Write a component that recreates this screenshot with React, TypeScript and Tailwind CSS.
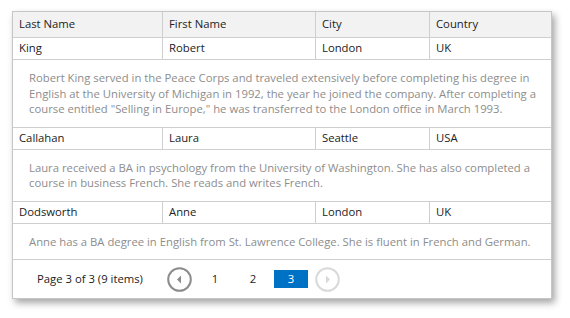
import React from "react";

const rows = [
  {
    last: "King",
    first: "Robert",
    city: "London",
    country: "UK",
    notes:
      'Robert King served in the Peace Corps and traveled extensively before completing his degree in English at the University of Michigan in 1992, the year he joined the company. After completing a course entitled "Selling in Europe," he was transferred to the London office in March 1993.',
  },
  {
    last: "Callahan",
    first: "Laura",
    city: "Seattle",
    country: "USA",
    notes:
      "Laura received a BA in psychology from the University of Washington. She has also completed a course in business French. She reads and writes French.",
  },
  {
    last: "Dodsworth",
    first: "Anne",
    city: "London",
    country: "UK",
    notes:
      "Anne has a BA degree in English from St. Lawrence College. She is fluent in French and German.",
  },
];

const grid = "grid grid-cols-[150px_153px_114px_1fr]";

function Circle({ dir, active }: { dir: "l" | "r"; active: boolean }) {
  const c = active ? "#8c8c8c" : "#d9d9d9";
  return (
    <svg width="25" height="25" viewBox="0 0 25 25">
      <circle cx="12.5" cy="12.5" r="11.3" fill="white" stroke={c} strokeWidth="2" />
      {dir === "l" ? (
        <path d="M14 8.5 L10 12.5 L14 16.5 Z" fill={c} />
      ) : (
        <path d="M11 8.5 L15 12.5 L11 16.5 Z" fill={c} />
      )}
    </svg>
  );
}

export default function App() {
  return (
    <div
      className="w-[570px] h-[318px] bg-white pt-[11px] pl-[12px]"
      style={{ fontFamily: '"Open Sans", "Noto Sans", sans-serif' }}
    >
      <div className="w-[540px] border border-[#c6c6c6] bg-white shadow-[3px_4px_7px_rgba(0,0,0,0.35)] text-[11.3px] text-[#222]">
        <div className={`${grid} h-[26px] bg-[#f2f2f2] border-b border-[#cfcfcf]`}>
          {["Last Name", "First Name", "City", "Country"].map((h, i) => (
            <div
              key={h}
              className={`flex items-center pl-[6px] ${i < 3 ? "border-r border-[#cfcfcf]" : ""}`}
            >
              {h}
            </div>
          ))}
        </div>
        {rows.map((r) => (
          <div key={r.last}>
            <div className={`${grid} h-[22px] border-b border-[#cfcfcf]`}>
              {[r.last, r.first, r.city, r.country].map((v, i) => (
                <div
                  key={i}
                  className={`flex items-center pl-[6px] ${i < 3 ? "border-r border-[#cfcfcf]" : ""}`}
                >
                  {v}
                </div>
              ))}
            </div>
            <div className="border-b border-[#cfcfcf] pl-[16px] pr-[6px] py-[10px] leading-[15.5px] text-[#8d8d8d]">
              {r.notes}
            </div>
          </div>
        ))}
        <div className="h-[38px] flex items-center pl-[24px]">
          <span className="text-[#222] w-[130px]">Page 3 of 3 (9 items)</span>
          <Circle dir="l" active />
          <span className="w-[46px] text-center text-[#222]">1</span>
          <span className="w-[30px] text-center text-[#222]">2</span>
          <span className="ml-[6px] w-[34px] h-[18px] bg-[#0072c6] text-white flex items-center justify-center">3</span>
          <span className="ml-[7px]">
            <Circle dir="r" active={false} />
          </span>
        </div>
      </div>
    </div>
  );
}
